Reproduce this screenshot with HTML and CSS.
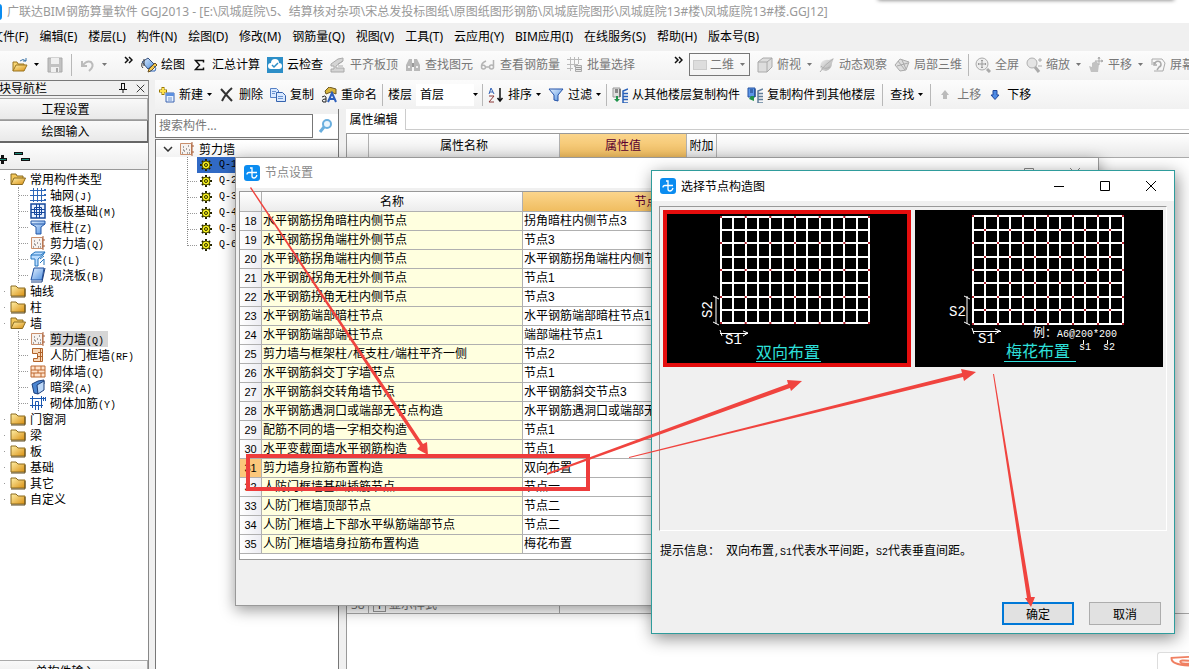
FILE: index.html
```html
<!DOCTYPE html>
<html lang="zh-CN">
<head>
<meta charset="utf-8">
<title>广联达BIM钢筋算量软件 GGJ2013</title>
<link rel="stylesheet" href="styles.css">
</head>
<body>
<svg class="defs" aria-hidden="true">
<defs>
<linearGradient id="gold" x1="0" y1="0" x2="1" y2="1"><stop offset="0" stop-color="#fff0a8"/><stop offset="1" stop-color="#d98f12"/></linearGradient>
<linearGradient id="blue" x1="0" y1="0" x2="1" y2="1"><stop offset="0" stop-color="#e4f1ff"/><stop offset="1" stop-color="#4f8fdf"/></linearGradient>
<linearGradient id="grey" x1="0" y1="0" x2="1" y2="1"><stop offset="0" stop-color="#f2f2f2"/><stop offset="1" stop-color="#a8a8a8"/></linearGradient>
<symbol id="folder" viewBox="0 0 16 16"><path d="M1 3h5l2 2h7v8H1z" fill="url(#gold)" stroke="#8a6a20"/><path d="M1 14h14V6" fill="none" stroke="#5f4a1c"/></symbol>
<symbol id="open" viewBox="0 0 16 16"><path d="M1 13V3h5l1 2h6v3" fill="#f3c75a" stroke="#8a6a20"/><path d="M1 13.500l3-6.500h11.500l-3 6.500z" fill="url(#gold)" stroke="#8a6a20"/></symbol>
<symbol id="openfile" viewBox="0 0 16 16"><path d="M1 14V5h4l1 2h6v2" fill="#f7d573" stroke="#9a7420"/><path d="M1 14l3-6h11l-3 6z" fill="url(#gold)" stroke="#9a7420"/><path d="M8 4q3-3 6 0M14 1v3h-3" fill="none" stroke="#3c74a8"/></symbol>
<symbol id="save" viewBox="0 0 16 16"><path d="M1 1h14v14H1z" fill="#c2c2c2" stroke="#aaa"/><path d="M4 1h8v6H4zM4 10h8v5H4z" fill="#f0f0f0"/><path d="M9 11h2v4H9z" fill="#aaa"/></symbol>
<symbol id="undo" viewBox="0 0 16 16"><path d="M2 4v5h5M3 8q4-5 8-3 4 4-2 9" fill="none" stroke="#bcbcbc" stroke-width="2"/></symbol>
<symbol id="draw" viewBox="0 0 16 16"><path d="M1 5l6-4 6 6-6 5z" fill="url(#blue)" stroke="#36517f"/><path d="M3 2v7M1 6q-1 4 1 5" fill="none" stroke="#333"/><path d="M8 12l6-6 2 2-6 6-3 1z" fill="#f3c84e" stroke="#6b5020"/><path d="M13 9q3 2 1 5H9" fill="none" stroke="#2f65b5"/></symbol>
<symbol id="sigma" viewBox="0 0 16 16"><path d="M11.500 5.500V3.500H3.500l4 4.500-4 4.500h8v-2" fill="none" stroke="#111" stroke-width="1.500"/></symbol>
<symbol id="cloud" viewBox="0 0 16 16"><path d="M0 0h16v16H0z" fill="#2c8ec7"/><path d="M4 12a3 3 0 0 1 0-6 4 4 0 0 1 8 0 3 3 0 0 1 0 6z" fill="#fff"/><path d="M5 8l2 2 4-4" fill="none" stroke="#2c8ec7" stroke-width="1.500"/></symbol>
<symbol id="slab" viewBox="0 0 16 16"><path d="M1 7l7-5 5-1v3l-7 5v2h8v4H1v-3h3V9H1z" fill="#d4d4d4" stroke="#aaa"/><path d="M8 9h5M8 7l5-3" stroke="#aaa"/></symbol>
<symbol id="binoc" viewBox="0 0 16 16"><path d="M4 2h3v12H1V8zM12 2H9v12h6V8z" fill="#b8b8b8"/><path d="M7 6h2v4H7z" fill="#999"/><path d="M3 10h2M11 10h2" stroke="#eee" stroke-width="2"/></symbol>
<symbol id="glasses" viewBox="0 0 16 16"><path d="M6 4Q1 6 1.500 10a2 2 0 1 0 4 0q-1-3-4-1M13.500 3v8M13.500 10a2 2 0 1 0-4 0 2 2 0 0 0 4 0M6 10h3" fill="none" stroke="#b4b4b4" stroke-width="1.500"/></symbol>
<symbol id="batch" viewBox="0 0 16 16"><path d="M0 2.500h15M0 7.500h11M0 11.500h6M3.500 0v14M7.500 0v10M11.500 0v7" stroke="#bbb"/><path d="M8.500 8.500h6v6h-6z" fill="#e8e8e8" stroke="#aaa"/><path d="M9 10.500h5M9 12.500h5" stroke="#999"/></symbol>
<symbol id="cube" viewBox="0 0 16 16"><path d="M1 5l5-4h9v9l-5 5H1z" fill="#ddd" stroke="#aaa"/><path d="M1 5h9v10M10 5l5-4" fill="none" stroke="#aaa"/></symbol>
<symbol id="orbit" viewBox="0 0 16 16"><path d="M2 6q3-4 8-3l5-2-2 5q0 6-6 8l-4-1-2-3z" fill="url(#grey)"/><path d="M1 15Q5 8 14 2M2 9q3 4 9 1" fill="none" stroke="#b0b0b0"/></symbol>
<symbol id="local" viewBox="0 0 16 16"><path d="M1 8l5-6 9 3-3 8-6 1z" fill="#ddd" stroke="#aaa"/><path d="M4 4l7 9M8 3l4 9M3 9l11-3" stroke="#aaa"/></symbol>
<symbol id="full" viewBox="0 0 16 16"><circle cx="7" cy="7" r="6" fill="#eee" stroke="#aaa"/><path d="M7 3v8M3 7h8M6 4l1-1 1 1M6 10l1 1 1-1M4 6L3 7l1 1M10 6l1 1-1 1" fill="none" stroke="#999"/><path d="M12 12l3 3" stroke="#aaa" stroke-width="3"/></symbol>
<symbol id="zoomi" viewBox="0 0 16 16"><circle cx="6" cy="6" r="5" fill="#e4e4e4" stroke="#b0b0b0"/><path d="M9 10l4 5" stroke="#aaa" stroke-width="3"/><path d="M12 3h4M14 1v4M12 9h4" stroke="#aaa"/></symbol>
<symbol id="pan" viewBox="0 0 16 16"><path d="M1 9l3 1V6l4-2 3 3-1 8H3z" fill="#c2c2c2"/><path d="M11 0v8M7 4h8M10 2l1-2 1 2M13 3l2 1-2 1" fill="none" stroke="#aaa"/></symbol>
<symbol id="spin" viewBox="0 0 16 16"><path d="M2 8V2h10l3 4-2 8H4" fill="none" stroke="#aaa"/><path d="M5 7a3 3 0 1 1 4 3l-2 3M4 5v3h3" fill="none" stroke="#aaa" stroke-width="1.500"/></symbol>
<symbol id="new" viewBox="0 0 16 16"><path d="M7 6h8v9H7z" fill="#e6f0ff" stroke="#3c64b0"/><path d="M7 6h8v3H7z" fill="#5c8fe0"/><path d="M9 11h4M9 13h4" stroke="#6f94cf"/><path d="M4 0v8M0 4h8" stroke="#987800" stroke-width="3"/><path d="M4 1v6M1 4h6" stroke="#ffe14a" stroke-width="2"/></symbol>
<symbol id="del" viewBox="0 0 16 16"><path d="M2 2l11 12M13 1Q7 6 3 14" fill="none" stroke="#333" stroke-width="2"/></symbol>
<symbol id="copy" viewBox="0 0 16 16"><path d="M.5 1.500h6l2 2v7h-8z" fill="#d8e8ff" stroke="#5580c4"/><path d="M6.500 5.500h6l3 3v6h-9z" fill="#d8e8ff" stroke="#3563ae"/><path d="M2 4.500h4M2 6.500h3M8 9.500h5M8 11.500h5" stroke="#6a92cf"/></symbol>
<symbol id="rename" viewBox="0 0 16 16"><path d="M4 4l4-4 7 2v5l-5-2-5 2z" fill="#d8b53c" stroke="#6c5824"/><path d="M7 15l4-9 4 9M8 12h6" fill="none" stroke="#2d5fbc" stroke-width="2"/><path d="M1 10q3-2 4 0v5M5 12q-5 0-3 3h3" fill="none" stroke="#222"/></symbol>
<symbol id="sort" viewBox="0 0 16 16"><path d="M1 7l2-6 3 6M2 5h3" fill="none" stroke="#3262b5"/><path d="M1 9h5l-5 6h5" fill="none" stroke="#8b3838"/><path d="M12 1v12M9.500 11l2.500 3 2.500-3" fill="none" stroke="#111" stroke-width="1.500"/></symbol>
<symbol id="filter" viewBox="0 0 16 16"><path d="M1 2h14l-5 6v6l-4-1V8z" fill="url(#blue)" stroke="#2453a8"/></symbol>
<symbol id="from" viewBox="0 0 16 16"><path d="M1 1h7v9H1z" fill="#dedede" stroke="#999"/><path d="M8 2v8M3 3h3M3 5h3" stroke="#333"/><path d="M16 2l-5 2v12h5M11 6.500h5M11 9.500h5M11 12.500h5" fill="none" stroke="#2860b8" stroke-width="1.500"/><path d="M4 9v3H2l3 3 3-3H6V9z" fill="#20934b"/></symbol>
<symbol id="to" viewBox="0 0 16 16"><path d="M1 1h7v9H1z" fill="#5c97e8" stroke="#2552a0"/><path d="M8 2v8M3 3h3M3 5h3" stroke="#163b7c"/><path d="M16 2l-5 2v12h5M11 6.500h5M11 9.500h5M11 12.500h5" fill="none" stroke="#5f7d9a" stroke-width="1.500"/><path d="M7 9v5l-5-2 2-3z" fill="#20934b"/></symbol>
<symbol id="up" viewBox="0 0 10 10"><path d="M5 0l4 5H7v4H3V5H1z" fill="#bbb"/></symbol>
<symbol id="down" viewBox="0 0 10 10"><path d="M5 9.500L1 5h2V.5h4V5h2z" fill="#4d8ae4" stroke="#20479a"/></symbol>
<symbol id="caret" viewBox="0 0 5 3"><path d="M0 0h5L2.500 3z" fill="currentColor"/></symbol>
<symbol id="more" viewBox="0 0 9 8"><path d="M1 1l3 3-3 3M5 1l3 3-3 3" fill="none" stroke="#111" stroke-width="1.500"/></symbol>
<symbol id="axis" viewBox="0 0 16 16"><path d="M0 3.500h14M0 8.500h14M0 13.500h14M3.500 1v14M7.500 1v14M11.500 1v14" stroke="#2d66b8"/><path d="M14 2h2v2h-2zM14 7h2v2h-2zM14 12h2v2h-2z" fill="#2d66b8"/></symbol>
<symbol id="raft" viewBox="0 0 16 16"><path d="M1 1h14v14H1z" fill="#e7f1ff" stroke="#15479c" stroke-width="1.500"/><path d="M4.500 4.500h7v7h-7zM6.500 1v14M9.500 1v14M1 6.500h14M1 9.500h14" fill="none" stroke="#15479c"/></symbol>
<symbol id="column" viewBox="0 0 16 16"><path d="M1 2h14v3l-4 3v7H6V8L1 5z" fill="url(#blue)" stroke="#2459a8"/><path d="M1 5h14" stroke="#2459a8"/></symbol>
<symbol id="wall" viewBox="0 0 16 16"><path d="M1.500 2.500h11v11h-11z" fill="#f7f2ef" stroke="#c98f6c"/><path d="M13 1v14M13 5h2M13 11h2" stroke="#a85f38"/><path d="M3 12h1M5 10h1M8 12h1M7 8h1M4 6h1M10 9h1M10 12h1M4 9h1M9 5h1" stroke="#555"/></symbol>
<symbol id="beam" viewBox="0 0 16 16"><path d="M1 4l4-3h10l-2 3-5 4v7H5V8H1z" fill="#b9dcff" stroke="#2474bd"/><path d="M1 4h10l4-3M10 8l4-3M10 12l4-4v6" fill="none" stroke="#2474bd"/></symbol>
<symbol id="plate" viewBox="0 0 16 16"><path d="M4 1h10l-2 12H1z" fill="url(#blue)" stroke="#1d4c9c"/><path d="M1 15h11l3-14" fill="none" stroke="#1d3f80"/></symbol>
<symbol id="guard" viewBox="0 0 16 16"><path d="M2.500 1.500h10v13h-9v-3h4v-5h-5z" fill="#f9d9b8" stroke="#b0622a"/><path d="M10.500 2v12M8 9.500h4M8 5.500h4" stroke="#b0622a"/></symbol>
<symbol id="brick" viewBox="0 0 16 16"><path d="M1 3h14v11H1z" fill="#ffe3cc" stroke="#bd6831"/><path d="M1 7h14M1 10h14M5 3v4M11 3v4M8 7v3M4 10v4M11 10v4" stroke="#bd6831"/></symbol>
<symbol id="dark" viewBox="0 0 16 16"><path d="M2 5l6-3 6-1v4L8 8v7l-4-1z" fill="#4b86d2" stroke="#1c3f7b"/><path d="M7 6l7-4v9l-6 4z" fill="#bcd7f7" stroke="#1c3f7b"/></symbol>
<symbol id="rebar" viewBox="0 0 16 16"><path d="M0 3.500h15M0 10.500h13M2.500 1v12M11.500 1v12M5.500 15V6.500h3V15" fill="none" stroke="#1c58b0"/><path d="M13.500 2v4M15.500 2v4" stroke="#1c58b0"/></symbol>
<symbol id="gear" viewBox="0 0 12 12"><path d="M6 0v12M0 6h12M2 2l8 8M10 2l-8 8" stroke="#202000" stroke-width="2"/><circle cx="6" cy="6" r="4" fill="#f4ee20" stroke="#505000"/><circle cx="6" cy="6" r="1.500" fill="#f4ee20" stroke="#303000"/></symbol>
<symbol id="app" viewBox="0 0 16 16"><rect width="16" height="16" rx="3" fill="#0b8cf0"/><path d="M6 3h2v8q0 2 2 2t3-3M3 9.500q0-2 2-2h8" fill="none" stroke="#fff" stroke-width="1.300"/></symbol>
<symbol id="lens" viewBox="0 0 16 16"><circle cx="9" cy="6" r="4" fill="#eaf5fd" stroke="#69aede" stroke-width="2"/><path d="M6 9l-4 5" stroke="#69aede" stroke-width="3"/></symbol>
<symbol id="min" viewBox="0 0 12 12"><path d="M1 6.500h10" stroke="currentColor"/></symbol>
<symbol id="max" viewBox="0 0 12 12"><path d="M1.500 1.500h9v9h-9z" fill="none" stroke="currentColor"/></symbol>
<symbol id="x" viewBox="0 0 12 12"><path d="M1 1l10 10M11 1L1 11" stroke="currentColor"/></symbol>
<symbol id="pin" viewBox="0 0 8 10"><path d="M2.500 0v6M5.500 0v6M0 6.500h8M4 6v4M2 .5h4" fill="none" stroke="#111"/></symbol>
<symbol id="chev" viewBox="0 0 10 6"><path d="M1 1l4 4 4-4" fill="none" stroke="#333" stroke-width="1.500"/></symbol>
</defs>
</svg>

<header class="titlebar"><svg class="i appicon"><use href="#app"/></svg><h1>广联达BIM钢筋算量软件 GGJ2013 - [E:\凤城庭院\5、结算核对杂项\宋总发投标图纸\原图纸图形钢筋\凤城庭院图形\凤城庭院13#楼\凤城庭院13#楼.GGJ12]</h1><span class="topshade"></span></header>

<nav class="menubar">
<button>文件(F)</button><button>编辑(E)</button><button>楼层(L)</button><button>构件(N)</button><button>绘图(D)</button><button>修改(M)</button><button>钢筋量(Q)</button><button>视图(V)</button><button>工具(T)</button><button>云应用(Y)</button><button>BIM应用(I)</button><button>在线服务(S)</button><button>帮助(H)</button><button>版本号(B)</button>
</nav>

<div class="toolbar main-tools">
<div class="group files">
<button aria-label="打开"><svg class="i"><use href="#openfile"/></svg><svg class="caret"><use href="#caret"/></svg></button>
<button aria-label="保存"><svg class="i"><use href="#save"/></svg></button><i class="sep"></i>
<button class="off" aria-label="撤销"><svg class="i"><use href="#undo"/></svg><svg class="caret"><use href="#caret"/></svg></button>
<svg class="more"><use href="#more"/></svg>
</div>
<div class="group actions">
<button><svg class="i"><use href="#draw"/></svg>绘图</button>
<button><svg class="i"><use href="#sigma"/></svg>汇总计算</button>
<button><svg class="i"><use href="#cloud"/></svg>云检查</button>
<button class="off"><svg class="i"><use href="#slab"/></svg>平齐板顶</button>
<button class="off"><svg class="i"><use href="#binoc"/></svg>查找图元</button>
<button class="off"><svg class="i"><use href="#glasses"/></svg>查看钢筋量</button>
<button class="off"><svg class="i"><use href="#batch"/></svg>批量选择</button>
<svg class="more"><use href="#more"/></svg>
</div>
<div class="group views">
<label class="dim"><span class="swatch"></span><select aria-label="视图维度"><option>二维</option></select><svg class="caret"><use href="#caret"/></svg></label>
<button class="off"><svg class="i"><use href="#cube"/></svg>俯视<svg class="caret"><use href="#caret"/></svg></button>
<button class="off"><svg class="i"><use href="#orbit"/></svg>动态观察</button>
<button class="off"><svg class="i"><use href="#local"/></svg>局部三维</button><i class="sep"></i>
<button class="off"><svg class="i"><use href="#full"/></svg>全屏</button>
<button class="off"><svg class="i"><use href="#zoomi"/></svg>缩放<svg class="caret"><use href="#caret"/></svg></button>
<button class="off"><svg class="i"><use href="#pan"/></svg>平移<svg class="caret"><use href="#caret"/></svg></button>
<button class="off"><svg class="i"><use href="#spin"/></svg>屏幕旋转</button>
</div>
</div>

<div class="workspace">
<aside class="navpane">
<div class="navhead"><span class="navtitle">模块导航栏</span><svg class="pin"><use href="#pin"/></svg><svg class="close"><use href="#x"/></svg></div>
<button class="navbtn">工程设置</button>
<button class="navbtn active">绘图输入</button>
<div class="expand"><svg width="32" height="14"><path d="M-2 9.500h9M2.500 5v9M14 3.500h9M21 9.500h9" fill="none" stroke="#111" stroke-width="3"/><path d="M-1 9.500h7M15 3.500h7M22 9.500h7" stroke="#1b8a78"/></svg></div>
<ul class="tree">
<li class="top"><svg class="i"><use href="#open"/></svg><span>常用构件类型</span>
<ul>
<li><svg class="i"><use href="#axis"/></svg><span>轴网<b>(J)</b></span></li>
<li><svg class="i"><use href="#raft"/></svg><span>筏板基础<b>(M)</b></span></li>
<li><svg class="i"><use href="#column"/></svg><span>框柱<b>(Z)</b></span></li>
<li><svg class="i"><use href="#wall"/></svg><span>剪力墙<b>(Q)</b></span></li>
<li><svg class="i"><use href="#beam"/></svg><span>梁<b>(L)</b></span></li>
<li><svg class="i"><use href="#plate"/></svg><span>现浇板<b>(B)</b></span></li>
</ul></li>
<li class="top"><svg class="i"><use href="#folder"/></svg><span>轴线</span></li>
<li class="top"><svg class="i"><use href="#folder"/></svg><span>柱</span></li>
<li class="top"><svg class="i"><use href="#open"/></svg><span>墙</span>
<ul>
<li><svg class="i"><use href="#wall"/></svg><span class="current">剪力墙<b>(Q)</b></span></li>
<li><svg class="i"><use href="#guard"/></svg><span>人防门框墙<b>(RF)</b></span></li>
<li><svg class="i"><use href="#brick"/></svg><span>砌体墙<b>(Q)</b></span></li>
<li><svg class="i"><use href="#dark"/></svg><span>暗梁<b>(A)</b></span></li>
<li><svg class="i"><use href="#rebar"/></svg><span>砌体加筋<b>(Y)</b></span></li>
</ul></li>
<li class="top"><svg class="i"><use href="#folder"/></svg><span>门窗洞</span></li>
<li class="top"><svg class="i"><use href="#folder"/></svg><span>梁</span></li>
<li class="top"><svg class="i"><use href="#folder"/></svg><span>板</span></li>
<li class="top"><svg class="i"><use href="#folder"/></svg><span>基础</span></li>
<li class="top"><svg class="i"><use href="#folder"/></svg><span>其它</span></li>
<li class="top"><svg class="i"><use href="#folder"/></svg><span>自定义</span></li>
</ul>
<button class="navbtn last">单构件输入</button>
</aside>

<main class="content">
<div class="toolbar part-tools">
<button><svg class="i"><use href="#new"/></svg>新建<svg class="caret tight"><use href="#caret"/></svg></button>
<button><svg class="i"><use href="#del"/></svg>删除</button>
<button><svg class="i"><use href="#copy"/></svg>复制</button>
<button><svg class="i"><use href="#rename"/></svg>重命名</button><i class="sep"></i>
<label class="floor">楼层<select><option>首层</option></select><svg class="caret"><use href="#caret"/></svg></label><i class="sep"></i>
<button><svg class="i"><use href="#sort"/></svg>排序<svg class="caret tight"><use href="#caret"/></svg></button>
<button><svg class="i"><use href="#filter"/></svg>过滤<svg class="caret tight"><use href="#caret"/></svg></button><i class="sep"></i>
<button><svg class="i"><use href="#from"/></svg>从其他楼层复制构件</button>
<button><svg class="i"><use href="#to"/></svg>复制构件到其他楼层</button><i class="sep"></i>
<button>查找<svg class="caret tight"><use href="#caret"/></svg></button><i class="sep"></i>
<button class="off move"><svg class="arrow"><use href="#up"/></svg>上移</button>
<button class="move"><svg class="arrow"><use href="#down"/></svg>下移</button>
</div>
<div class="panes">
<section class="parts">
<div class="search"><input type="text" aria-label="搜索构件" placeholder="搜索构件..."><button aria-label="搜索"><svg class="i"><use href="#lens"/></svg></button></div>
<div class="parttree">
<div class="partroot"><svg class="chev"><use href="#chev"/></svg><svg class="i"><use href="#wall"/></svg><span>剪力墙</span></div>
<ul class="partlist">
<li class="sel"><svg class="gear"><use href="#gear"/></svg><b>Q-1</b></li>
<li><svg class="gear"><use href="#gear"/></svg><b>Q-2</b></li>
<li><svg class="gear"><use href="#gear"/></svg><b>Q-3</b></li>
<li><svg class="gear"><use href="#gear"/></svg><b>Q-4</b></li>
<li><svg class="gear"><use href="#gear"/></svg><b>Q-5</b></li>
<li><svg class="gear"><use href="#gear"/></svg><b>Q-6</b></li>
</ul>
</div>
</section>
<section class="props">
<div class="tabs"><button class="tab">属性编辑</button></div>
<div class="propgrid">
<div class="prow phead"><span></span><span>属性名称</span><span class="hot">属性值</span><span>附加</span></div>
<div class="pbody"><div class="prow pitem"><span>38</span><span class="pname"><i class="plus">+</i>显示样式</span><span></span></div></div>
</div>
</section>
</div>
</main>
</div>

<section class="dialog nodes" role="dialog" aria-label="节点设置">
<header><svg class="i"><use href="#app"/></svg><h2>节点设置</h2><div class="winctl"><svg><use href="#max"/></svg><svg><use href="#x"/></svg></div></header>
<div class="tablebox">
<table>
<colgroup><col class="c1"><col class="c2"><col class="c3"><col></colgroup>
<thead><tr><th></th><th>名称</th><th class="hot">节点图</th><th></th></tr></thead>
<tbody>
<tr><th>18</th><td>水平钢筋拐角暗柱内侧节点</td><td>拐角暗柱内侧节点3</td><td></td></tr>
<tr><th>19</th><td>水平钢筋拐角端柱外侧节点</td><td>节点3</td><td></td></tr>
<tr><th>20</th><td>水平钢筋拐角端柱内侧节点</td><td>水平钢筋拐角端柱内侧节点1</td><td></td></tr>
<tr><th>21</th><td>水平钢筋拐角无柱外侧节点</td><td>节点1</td><td></td></tr>
<tr><th>22</th><td>水平钢筋拐角无柱内侧节点</td><td>节点3</td><td></td></tr>
<tr><th>23</th><td>水平钢筋端部暗柱节点</td><td>水平钢筋端部暗柱节点1</td><td></td></tr>
<tr><th>24</th><td>水平钢筋端部端柱节点</td><td>端部端柱节点1</td><td></td></tr>
<tr><th>25</th><td>剪力墙与框架柱<b>/</b>框支柱<b>/</b>端柱平齐一侧</td><td>节点2</td><td></td></tr>
<tr><th>26</th><td>水平钢筋斜交丁字墙节点</td><td>节点1</td><td></td></tr>
<tr><th>27</th><td>水平钢筋斜交转角墙节点</td><td>水平钢筋斜交节点3</td><td></td></tr>
<tr><th>28</th><td>水平钢筋遇洞口或端部无节点构造</td><td>水平钢筋遇洞口或端部无节点构造</td><td></td></tr>
<tr><th>29</th><td>配筋不同的墙一字相交构造</td><td>节点1</td><td></td></tr>
<tr><th>30</th><td>水平变截面墙水平钢筋构造</td><td>节点1</td><td></td></tr>
<tr><th class="cur">31</th><td>剪力墙身拉筋布置构造</td><td>双向布置</td><td></td></tr>
<tr><th>32</th><td>人防门框墙基础插筋节点</td><td>节点一</td><td></td></tr>
<tr><th>33</th><td>人防门框墙顶部节点</td><td>节点二</td><td></td></tr>
<tr><th>34</th><td>人防门框墙上下部水平纵筋端部节点</td><td>节点二</td><td></td></tr>
<tr><th>35</th><td>人防门框墙墙身拉筋布置构造</td><td>梅花布置</td><td></td></tr>
</tbody>
</table>
</div>
</section>

<section class="dialog chooser" role="dialog" aria-label="选择节点构造图">
<header><svg class="i"><use href="#app"/></svg><h2>选择节点构造图</h2><div class="winctl"><svg><use href="#min"/></svg><svg><use href="#max"/></svg><svg><use href="#x"/></svg></div></header>
<div class="gallery">
<svg class="diagram" viewBox="0 0 248 157">
<rect width="248" height="157" fill="#000"/>
<path d="M58 7v106M70 7v106M83 7v106M95 7v106M107 7v106M120 7v106M132 7v106M144 7v106M157 7v106M169 7v106M181 7v106M194 7v106M206 7v106M57 7h150M57 20h150M57 33h150M57 47h150M57 60h150M57 73h150M57 87h150M57 100h150M57 113h150" stroke="#fff" stroke-width="2" fill="none"/>
<path d="M57 7h151M57 33h151M57 60h151M57 87h151M57 113h151" stroke="#b3202c" stroke-width="2" stroke-dasharray="2 22.670"/>
<path d="M53 86v28M50 86l6 3M50 112l6 3M57 123.500h28M57 120l2 6M80 121l5 2-5 3" fill="none" stroke="#fff"/>
<text class="ms" transform="translate(49 108) rotate(-90)">S2</text><text class="ms" x="62" y="134">S1</text>
<text class="cap" x="93" y="148">双向布置</text><path d="M93 151.500h65" stroke="#2ee0dc"/>
<rect x="2" y="2" width="244" height="153" fill="none" stroke="#e50d0d" stroke-width="4"/>
</svg>
<svg class="diagram" viewBox="0 0 248 157">
<rect width="248" height="157" fill="#000"/>
<path d="M58 6v108M70 6v108M83 6v108M95 6v108M108 6v108M120 6v108M133 6v108M145 6v108M158 6v108M170 6v108M183 6v108M195 6v108M208 6v108M57 6h152M57 20h152M57 33h152M57 47h152M57 60h152M57 73h152M57 87h152M57 100h152M57 114h152" stroke="#fff" stroke-width="2" fill="none"/>
<path d="M57 6h152M57 33h152M57 60h152M57 87h152M57 114h152M69 20h140M69 47h140M69 73h140M69 100h140" stroke="#b3202c" stroke-width="2" stroke-dasharray="2 23"/>
<path d="M52 86v28M49 86l6 3M49 112l6 3M58 121.500h28M57 118l2 6M80 119l5 2-5 3M168.500 130v4M192.500 130v4" fill="none" stroke="#fff"/>
<text class="ms" x="34" y="106">S2</text><text class="ms" x="63" y="133">S1</text>
<text class="note" x="118" y="127">例：</text><text class="code" x="142" y="127">A6@200*200</text><text class="code" x="164" y="140">s1</text><text class="code" x="188" y="140">s2</text>
<text class="cap" x="91" y="147">梅花布置</text><path d="M89 151.500h72" stroke="#2ee0dc"/>
</svg>
</div>
<p class="hint">提示信息：<b> </b>双向布置<b>,S1</b>代表水平间距，<b>S2</b>代表垂直间距。</p>
<footer><button class="ok">确定</button><button>取消</button></footer>
</section>

<svg class="marks" aria-hidden="true">
<rect x="248" y="456" width="340" height="33" fill="none" stroke="#ee3c3c" stroke-width="4"/>
<g fill="#f0443f">
<path d="M250 188L251 187L423 444L427 442L428 455L417 449L420 446Z"/>
<path d="M547 473L788 384L787 380L802 381L791 391L790 388L547 475Z"/>
<path d="M629 457L962 373L961 369L976 372L964 381L963 377L629 458Z"/>
<path d="M993 374L994 374L1031 597L1035 597L1031 607L1025 598L1027 598Z"/>
</g>
</svg>
<div class="ime"><svg viewBox="0 0 32 17"><path d="M32 4L14 5q-1 7 18 8M32 8q-9-1-9 1t9 2" fill="none" stroke="#f08062" stroke-width="2"/></svg></div>
</body>
</html>
```
FILE: styles.css
```css
* { box-sizing: border-box; }
html, body { height: 100%; }
body {
  margin: 0; overflow: hidden; position: relative; display: flex; flex-direction: column;
  background: #f0f0f0; color: #000;
  font: 12px/16px "Noto Sans", "Noto Sans CJK SC", sans-serif;
}
button, input, select { font: inherit; color: inherit; margin: 0; padding: 0; border: 0; background: none; border-radius: 0; appearance: none; }
h1, h2, p, ul { margin: 0; padding: 0; font: inherit; list-style: none; }
b { font: 10px/10px "Liberation Mono", monospace; white-space: pre; }
i { font-style: normal; }
svg { display: block; flex: none; }
.defs { position: absolute; width: 0; height: 0; }
.i { width: 16px; height: 16px; }
.caret { width: 5px; height: 3px; margin-left: 5px; }
.caret.tight { margin-left: 0; }
.more { width: 9px; height: 8px; margin-bottom: 10px; }
.sep { width: 1px; height: 22px; background: #b8b8b8; flex: none; }

.titlebar { flex: none; height: 23px; display: flex; align-items: center; background: #fff; color: #999; white-space: nowrap; }
.titlebar h1 { margin-left: 5px; }
.appicon { margin-left: -14px; }
.topshade { position: absolute; top: -4px; right: 15px; width: 296px; height: 4px; box-shadow: 0 0 4px #666; }
.menubar { flex: none; height: 28px; display: flex; align-items: center; gap: 11px; margin-left: -9px; white-space: nowrap; }

.toolbar { flex: none; height: 29px; display: flex; align-items: center; gap: 7px; white-space: nowrap; background: linear-gradient(#fcfcfc, #f1f1f1); }
.toolbar button { display: flex; align-items: center; gap: 4px; flex: none; }
.off { color: #777; }
.group { display: flex; align-items: center; gap: 7px; flex: none; }
.main-tools { gap: 0; overflow: hidden; padding-bottom: 2px; }
.files { width: 141px; padding-left: 12px; gap: 8px; }
.files .more { margin-left: 9px; }
.files button .caret { margin-left: 2px; }
.actions { width: 548px; }
.actions .more { margin-left: 32px; }
.dim { display: flex; align-items: center; width: 61px; height: 23px; border: 1px solid #777; color: #777; padding: 0 3px; }
.dim .swatch { width: 14px; height: 10px; background: #ddd; border: 1px solid #ccc; }
.dim select { width: 28px; margin-left: 3px; }
.dim .caret { margin-left: 2px; }
.views button .caret { margin-left: 2px; }
.views .sep { margin: 0 -1px; }

.workspace { flex: 1; min-height: 0; display: flex; }
.navpane { width: 149px; flex: none; display: flex; flex-direction: column; border-right: 1px solid #888; margin-right: 6px; font-family: "Noto Sans CJK SC", sans-serif; }
.navhead { height: 16px; display: flex; align-items: center; border: solid #777; border-width: 1px 0; margin-bottom: 2px; }
.navtitle { width: 47px; display: flex; justify-content: flex-end; overflow: hidden; white-space: nowrap; }
.pin { width: 8px; height: 10px; margin-left: 72px; }
.close { width: 9px; height: 9px; margin-left: 9px; }
.navbtn { flex: none; height: 22px; padding-right: 16px; border: 1px solid #aaa; border-left: 0; background: linear-gradient(#f9f9f9, #e9e9e9); }
.navbtn.active { height: 23px; border-color: #999 #666 #666; border-bottom-width: 2px; }
.expand { height: 26px; padding-top: 7px; background: linear-gradient(#fdfdfd, #ededed); }
.tree { flex: 1; min-height: 0; overflow: hidden; background: #fff; border-top: 1px solid #999; padding-top: 1px; }
.tree li { display: flex; flex-wrap: wrap; align-items: center; gap: 0 4px; min-height: 16px; }
.tree .top { padding-left: 10px; background: linear-gradient(90deg, #999 50%, transparent 50%) 4px 8px / 2px 1px no-repeat; }
.tree ul { width: 100%; margin-left: 8px; border-left: 1px dotted #999; }
.tree ul li { height: 16px; gap: 4px; padding-left: 11px; background: repeating-linear-gradient(90deg, #999 0 1px, transparent 1px 2px) 0 8px / 10px 1px no-repeat; }
.tree .i { width: 16px; height: 16px; }
.tree .current { background: #d6d6d6; padding-right: 4px; }
.navbtn.last { height: 22px; margin-bottom: -13px; }

.content { flex: 1; min-width: 0; display: flex; flex-direction: column; }
.part-tools { padding-left: 4px; overflow: hidden; }
.part-tools .sep:nth-of-type(-n+3) { margin: 0 -2px; }
.floor { display: flex; align-items: center; height: 22px; }
.floor select { width: 58px; height: 22px; margin-left: 4px; padding-left: 4px; background: #fff; }
.floor .caret { margin: 0 -1px; }
.arrow { width: 10px; height: 10px; }
.part-tools .move { gap: 7px; margin-left: 2px; }
.panes { flex: 1; min-height: 0; display: flex; }
.parts { width: 184px; flex: none; display: flex; flex-direction: column; border-right: 1px solid #777; margin-right: 7px; padding-top: 5px; }
.search { display: flex; height: 24px; margin-bottom: 1px; }
.search input { width: 158px; border: 1px solid #777; background: #fff; padding: 0 3px; }
.search input::placeholder { color: #777; opacity: 1; }
.search button { flex: 1; display: grid; place-items: center; background: #fff; }
.parttree { flex: 1; background: #fff; border: solid #777; border-width: 1px 0 0 1px; padding-top: 1px; font-family: "Noto Sans CJK SC", sans-serif; }
.partroot { display: flex; align-items: center; height: 16px; padding-left: 7px; background: linear-gradient(#fff, #f3f3f3); }
.partroot span { margin-left: 4px; }
.chev { width: 10px; height: 6px; margin-right: 6px; }
.partlist { margin-left: 31px; border-left: 1px dotted #888; height: 89px; }
.partlist li { display: flex; align-items: center; height: 16px; gap: 7px; padding-left: 12px; background: repeating-linear-gradient(90deg, #999 0 1px, transparent 1px 2px) 0 8px / 10px 1px no-repeat; }
.partlist .sel { background: linear-gradient(#316ac5, #316ac5) 9px 0 / 76px 16px no-repeat; }
.gear { width: 12px; height: 12px; }

.props { flex: 1; min-width: 0; display: flex; flex-direction: column; background: #fff; }
.tabs { height: 21px; border-bottom: 1px solid #ccc; display: flex; margin-bottom: 3px; }
.tab { width: 60px; background: #fff; border-right: 1px solid #ccc; height: 21px; padding-right: 4px; }
.propgrid { flex: 1; min-height: 0; border: solid #999; border-width: 1px 0 0 1px; }
.prow { display: grid; grid-template-columns: 22px 191px 127px 30px 1fr; }
.phead { height: 24px; background: linear-gradient(#fff, #e9e9e9); border-bottom: 1px solid #aaa; }
.phead span { display: grid; place-items: center; border-right: 1px solid #b0b0b0; }
.phead .hot, thead .hot { background: linear-gradient(#fbd58c, #f0bd60); color: #5a0030; }
.pbody { height: 456px; display: flex; flex-direction: column; justify-content: flex-end; }
.pitem { height: 17px; border-bottom: 1px solid #aaa; color: #777; }
.pitem span { border-right: 1px solid #aaa; padding-left: 4px; line-height: 16px; }
.pname { display: flex; align-items: center; gap: 3px; }
.plus { width: 13px; height: 13px; border: 1px solid #999; line-height: 11px; text-align: center; color: #111; }

.dialog { position: absolute; display: flex; flex-direction: column; background: #f0f0f0; border: 1px solid #999; }
.dialog header { display: flex; align-items: center; height: 30px; padding-left: 8px; gap: 5px; background: #fff; flex: none; }
.winctl { display: flex; gap: 34px; margin-left: auto; }
.winctl svg { width: 12px; height: 12px; }
.nodes { left: 235px; top: 157px; width: 864px; padding-bottom: 45px; box-shadow: 0 4px 14px #0006; font-family: "Liberation Sans", "Noto Sans CJK SC", sans-serif; }
.nodes header { color: #888; padding-right: 17px; }
.tablebox { margin: 3px 3px 0; border: 1px solid #999; background: #fff; padding-bottom: 5px; overflow: hidden; }
table { width: 100%; border-collapse: separate; border-spacing: 0; table-layout: fixed; }
.c1 { width: 22px; } .c2 { width: 261px; } .c3 { width: 260px; }
tr { height: 19px; }
th, td { height: 19px; padding: 0 1px; line-height: 18px; border: solid #b0b0b0; border-width: 0 1px 1px 0; font-weight: normal; text-align: left; white-space: nowrap; overflow: hidden; }
thead th { height: 20px; text-align: center; background: linear-gradient(#fff, #ececec); }
tbody th { background: linear-gradient(90deg, #fff, #ececf2); font-size: 11px; text-align: center; }
tbody .cur { background: #fbc77b; }
td:nth-child(2) { background: #ffffdf; }

.chooser { left: 651px; top: 170px; width: 524px; border-color: #2f9c9c; box-shadow: 2px 4px 16px #0007; padding-bottom: 8px; font-family: "Noto Sans CJK SC", sans-serif; }
.chooser header { padding-right: 17px; }
.gallery { display: flex; align-items: flex-start; gap: 4px; height: 325px; margin: 5px 7px 0; padding: 3px; border: 1px solid; border-color: #999 #fff #fff #999; }
.diagram { flex: 1; min-width: 0; }
.ms, .code { font: 14px "Liberation Mono", monospace; fill: #fff; }
.code { font-size: 10px; }
.note { font-size: 12px; fill: #fff; }
.cap { font-size: 16px; fill: #2ee0dc; }
.hint { margin: 11px 8px 44px; line-height: 16px; }
.chooser footer { display: flex; justify-content: flex-end; gap: 15px; padding-right: 13px; }
.chooser footer button { width: 72px; height: 23px; background: #e1e1e1; border: 1px solid #adadad; }
.chooser footer .ok { border: 2px solid #0078d7; }

.marks { position: absolute; left: 0; top: 0; width: 100%; height: 100%; pointer-events: none; }
.ime { position: absolute; right: 0; bottom: 0; width: 32px; height: 17px; background: #fff; border: solid #ddd; border-width: 1px 0 0 1px; border-radius: 3px 0 0; }
```
